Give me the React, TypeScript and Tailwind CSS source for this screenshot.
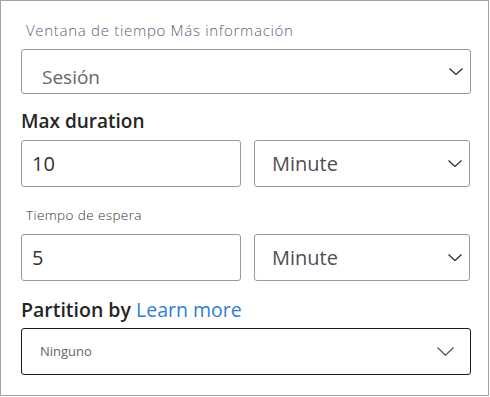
import React from 'react';

function Chevron({ className = '' }: { className?: string }) {
  return (
    <svg className={className} viewBox="0 0 14 7" fill="none" stroke="currentColor" strokeWidth={1.3}>
      <path d="M0.5 0.5 L7 6.5 L13.5 0.5" />
    </svg>
  );
}

function Select({ value, className = '' }: { value: string; className?: string }) {
  return (
    <div className={`h-[47px] border border-[#9a9a9a] rounded-[3px] flex items-center justify-between pl-[17px] pr-[7px] ${className}`}>
      <span className="text-[20px] text-[#505050]">{value}</span>
      <Chevron className="w-[14px] h-[7px] text-[#333]" />
    </div>
  );
}

function NumberInput({ value }: { value: string }) {
  return (
    <div className="h-[47px] border border-[#9a9a9a] rounded-[3px] flex items-center pl-[10px]">
      <span className="text-[20px] text-[#333]">{value}</span>
    </div>
  );
}

export default function App() {
  return (
    <div className="w-[489px] h-[396px] border border-[#a3a3a3] bg-white pl-[20px] pr-[17px] font-['Open_Sans','Noto_Sans',sans-serif]">
      {/* window type */}
      <div className="mt-[19px] pl-[5px] text-[15px] leading-[20px] font-light text-[#56657a] tracking-[0.7px]">
        Ventana de tiempo Más información
      </div>
      <div className="mt-[9px] h-[45px] border border-[#9a9a9a] rounded-[3px] flex justify-between pl-[20px] pr-[7px]">
        <span className="text-[19px] text-[#666] pt-[13px]">Sesión</span>
        <Chevron className="w-[14px] h-[7px] text-[#333] mt-[18px]" />
      </div>

      {/* max duration */}
      <div className="mt-[15px] text-[19px] leading-[24px] font-semibold text-[#252525]">Max duration</div>
      <div className="mt-[7px] grid grid-cols-[220px_216px] gap-[13px]">
        <NumberInput value="10" />
        <Select value="Minute" />
      </div>

      {/* timeout */}
      <div className="mt-[19px] pl-[5px] text-[13.5px] leading-[18px] font-light text-[#333] tracking-[0.4px]">Tiempo de espera</div>
      <div className="mt-[10px] grid grid-cols-[220px_216px] gap-[13px]">
        <NumberInput value="5" />
        <Select value="Minute" />
      </div>

      {/* partition */}
      <div className="mt-[16px] text-[19.5px] leading-[26px]">
        <span className="font-semibold text-[#252525]">Partition by</span>{' '}
        <span className="text-[#2f7fd6]">Learn more</span>
      </div>
      <div className="mt-[5px] h-[47px] border border-[#1a1a1a] rounded-[3px] flex items-center justify-between pl-[18px] pr-[16px]">
        <span className="text-[13px] text-[#666]">Ninguno</span>
        <svg className="w-[17px] h-[9px] text-[#555]" viewBox="0 0 17 9" fill="none" stroke="currentColor" strokeWidth={1.2}>
          <path d="M0.5 0.5 L8.5 8.3 L16.5 0.5" />
        </svg>
      </div>
    </div>
  );
}
